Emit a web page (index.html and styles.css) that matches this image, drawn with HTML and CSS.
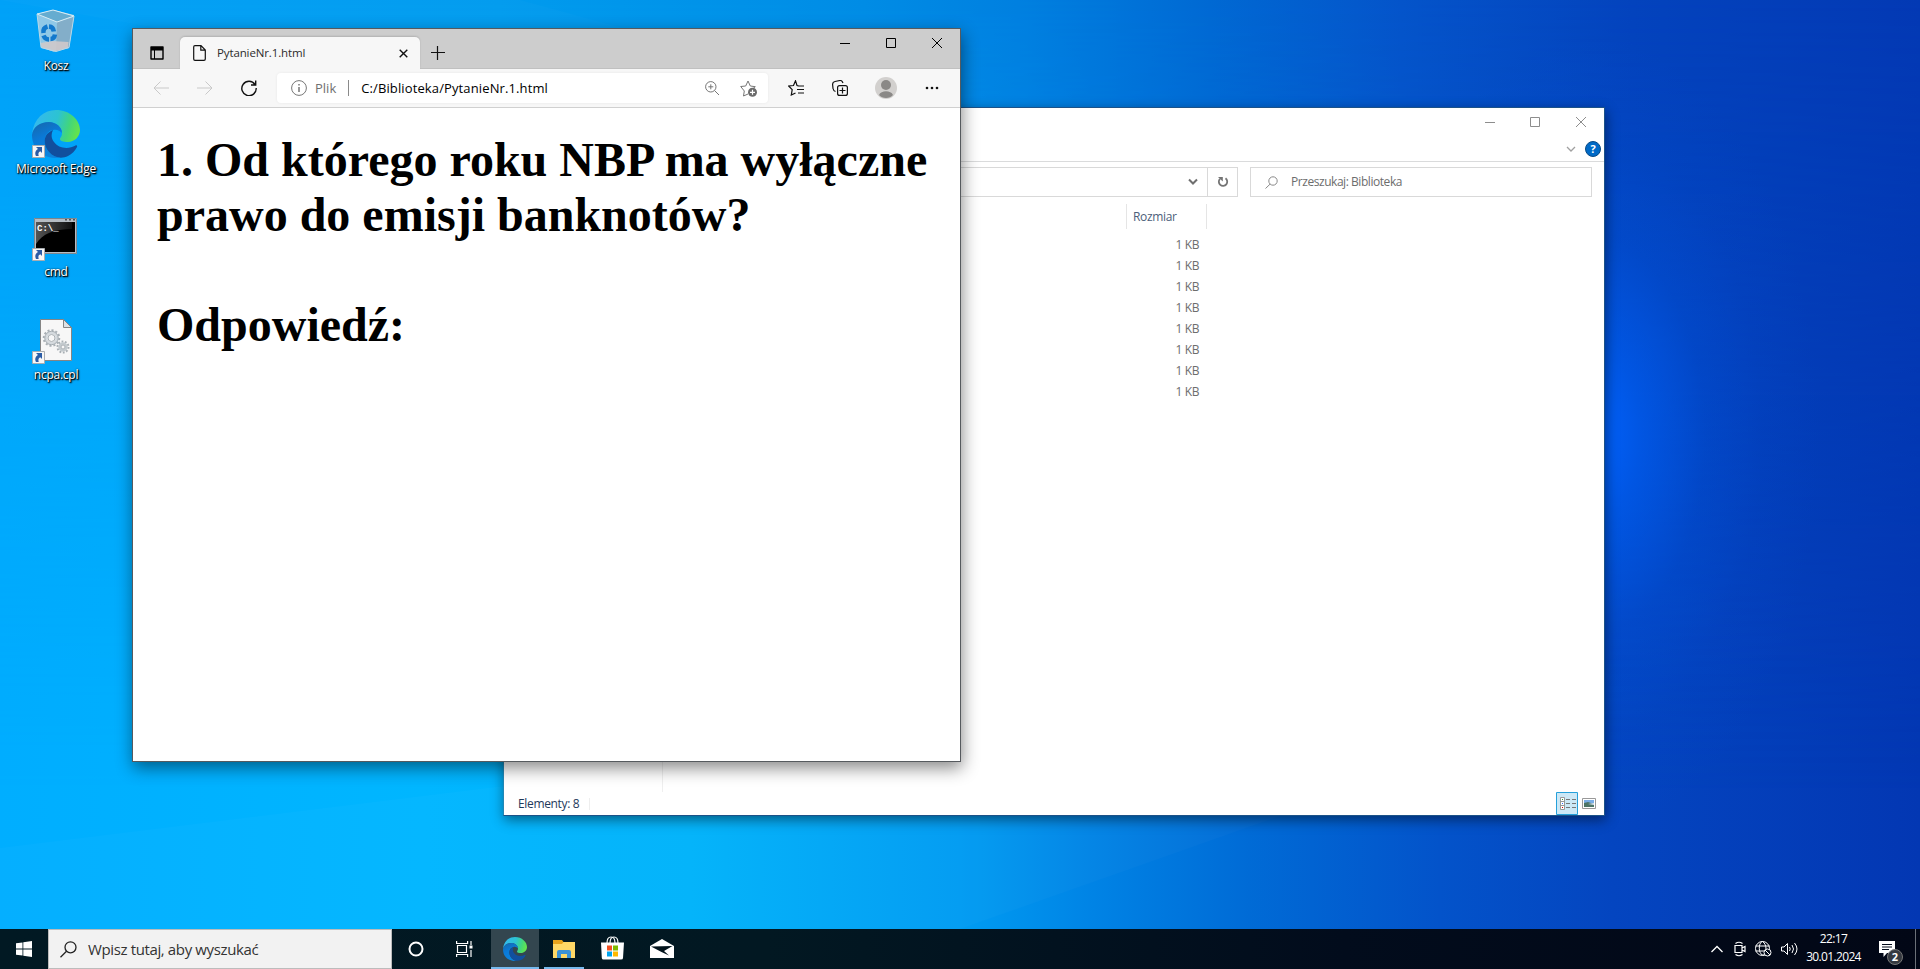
FILE: index.html
```
<!DOCTYPE html>
<html lang="pl">
<head>
<meta charset="utf-8">
<title>Pulpit</title>
<link rel="stylesheet" href="styles.css">
</head>
<body>
<svg width="0" height="0" class="defs" aria-hidden="true">
  <defs>
    <linearGradient id="eTop" x1="0" y1=".3" x2="1" y2=".5"><stop offset="0" stop-color="#35b8f1"/><stop offset=".5" stop-color="#2cc3d2"/><stop offset=".78" stop-color="#42d67b"/><stop offset="1" stop-color="#65e34c"/></linearGradient>
    <linearGradient id="eMid" x1="0" y1="0" x2=".4" y2="1"><stop offset="0" stop-color="#1767a9"/><stop offset=".5" stop-color="#0a7ad8"/><stop offset="1" stop-color="#0c83dc"/></linearGradient>
    <linearGradient id="cmdShine" x1="0" y1="0" x2="1" y2="0"><stop offset="0" stop-color="#555"/><stop offset="1" stop-color="#111"/></linearGradient>
    <symbol id="edge" viewBox="0 0 48 48">
      <path d="M0 24C2 8 12 0 24 0c14 0 24 10 24 20 0 7-6 12-12 12-5 0-8-1-8-3 0-1.500 2-2 2-6 0-6-6-11-13-11C8 12 2 17 0 24z" fill="url(#eTop)"/>
      <path d="M0 25C1 17 8 12 17 12c7 0 13 5 13 11-2-2-5-4-9-3-6 1-9 7-8 13 1 8 7 13 14 15C12 49 0 40 0 25z" fill="url(#eMid)"/>
      <path d="M19 21c-8 4-8 14-2 21 5 6 13 7 19 4 4-2 7-5 9-9 .500-1-.500-2-1.500-1.500C36 40 26 38 22 32c-3-4-3-8-1-12z" fill="#114f9e"/>
    </symbol>
    <symbol id="shortcut" viewBox="0 0 13 13">
      <path d="M.5.5h12v12H.5z" fill="#f7f7f7" stroke="#a9adb1"/>
      <path d="M4 2h6v6L8.300 6.300C6.500 7 6 8.500 6.700 11H4C2.500 8 3.500 5.500 6 4z" fill="#2b5ca6"/>
    </symbol>
  </defs>
</svg>
<div class="desktop">
  <svg class="rays" viewBox="0 0 1920 929" preserveAspectRatio="none">
    <path d="M0 848L504 786 1604 700 1280 816 960 929H0z" fill="#fff" opacity=".018"/>
    <path d="M0 0h520L960 120 504 90z" fill="#fff" opacity=".015"/>
  </svg>

  <nav class="icons">
    <div class="icon"><div class="pic"><svg width="48" height="48" viewBox="0 0 48 48">
      <path d="M5 7l17-4 20 5-5 33-16 3.500L9 40z" fill="#a9cfe4" opacity=".85"/>
      <path d="M25 15l17-5-5 31-13 3.500z" fill="#83aec9"/>
      <path d="M5 7l16-4 21 6-17 6z" fill="#65acd0" stroke="#d9edf5"/>
      <path d="M8.500 36l12-2 16 1-.500 6-14 3.500L9.500 41z" fill="#cfc9ca" opacity=".9"/>
      <path d="M5 7l4 33.500L24 44.500l13-4L42 9" fill="none" stroke="#b9d9e8"/>
      <g fill="none" stroke="#1279cd" stroke-width="4.500"><path d="M11.500 26c-.500-3 1-5.500 4-6.500"/><path d="M17 19.500c3 .200 4.500 2 4.800 5"/><path d="M11.500 28.500c1 2.500 3 4 5.500 4M18.500 32c2.500 0 4-1.500 4.500-4.500"/></g>
    </svg></div><span>Kosz</span></div>
    <div class="icon"><div class="pic"><svg width="48" height="48"><use href="#edge"/></svg><svg class="arrow" width="13" height="13"><use href="#shortcut"/></svg></div><span>Microsoft Edge</span></div>
    <div class="icon"><div class="pic"><svg width="48" height="48" viewBox="0 0 48 48">
      <path d="M2 5h43v36H2z" fill="#b5bcc3"/><path d="M2.500 5.500h42v35h-42z" fill="none" stroke="#7d858c"/>
      <path d="M33 6h2v1.500h-2zM37 6h2v1.500h-2zM41 6h2v1.500h-2z" fill="#555"/>
      <path d="M4 9h39v30H4z" fill="#000"/><path d="M4 9h36v7C22 16 10 21 4 31z" fill="url(#cmdShine)"/>
      <text class="prompt" x="5" y="18">C:\_</text>
    </svg><svg class="arrow" width="13" height="13"><use href="#shortcut"/></svg></div><span>cmd</span></div>
    <div class="icon"><div class="pic"><svg width="48" height="48" viewBox="0 0 48 48">
      <path d="M8.500 3.500h23l8 8v33h-31z" fill="#f7f7f7" stroke="#858585"/><path d="M31.500 3.500v8h8z" fill="#dce1e5" stroke="#858585"/>
      <g fill="none" stroke="#a8afb4"><circle cx="19.500" cy="22" r="7.500" stroke-width="2.500" stroke-dasharray="2 1.900"/><circle cx="19.500" cy="22" r="5.500" stroke="#d5dade" stroke-width="3"/><circle cx="19.500" cy="22" r="6.700"/><circle cx="19.500" cy="22" r="3.500"/><circle cx="31" cy="31" r="5.500" stroke-width="2" stroke-dasharray="1.800 1.600"/><circle cx="31" cy="31" r="3.500" stroke="#c3cace" stroke-width="2.500"/><circle cx="31" cy="31" r="2"/></g>
    </svg><svg class="arrow" width="13" height="13"><use href="#shortcut"/></svg></div><span>ncpa.cpl</span></div>
  </nav>

  <section class="window explorer">
    <div class="ex-title">
      <svg width="46" height="29" viewBox="0 0 46 29"><path d="M19 14.500h10"/></svg>
      <svg width="46" height="29" viewBox="0 0 46 29"><path d="M18.500 9.500h9v9h-9z"/></svg>
      <svg width="46" height="29" viewBox="0 0 46 29"><path d="M18 9l10 10M28 9l-10 10"/></svg>
    </div>
    <div class="ex-ribbon">
      <svg width="10" height="8" viewBox="0 0 10 8"><path d="M1 2l4 4 4-4" fill="none" stroke="#a0a0a0" stroke-width="1.300"/></svg>
      <b class="help">?</b>
    </div>
    <div class="ex-nav">
      <div class="ex-addr"><svg width="10" height="8" viewBox="0 0 10 8"><path d="M1 1.500l4 4 4-4" fill="none" stroke="#6f6f6f" stroke-width="2"/></svg></div>
      <div class="ex-refresh"><svg width="12" height="12" viewBox="0 0 12 12"><path d="M8.500 2.300a4.200 4.200 0 1 1-5.500.500" fill="none" stroke="#747474" stroke-width="1.800"/><path d="M1 1h4.800v4.500z" fill="#747474"/></svg></div>
      <div class="ex-search"><svg width="13" height="13" viewBox="0 0 13 13"><g fill="none" stroke="#8a8a8a"><circle cx="8" cy="5" r="4.200"/><path d="M5 8.200L.5 12.500"/></g></svg><span>Przeszukaj: Biblioteka</span></div>
    </div>
    <div class="ex-body">
      <div class="ex-tree"></div>
      <div class="ex-list">
        <div class="col-head"><span>Rozmiar</span></div>
        <ul><li>1 KB</li><li>1 KB</li><li>1 KB</li><li>1 KB</li><li>1 KB</li><li>1 KB</li><li>1 KB</li><li>1 KB</li></ul>
      </div>
    </div>
    <div class="ex-status">
      <span class="count">Elementy: 8</span><i></i>
      <svg class="details" width="22" height="23" viewBox="0 0 22 23"><path d="M.5.5h21v22H.5z" fill="#cce8f6" stroke="#26a0da"/><path d="M4.500 5.500h4v12h-4zM4.500 9.500h4M4.500 13.500h4" fill="#fff" stroke="#999"/><path d="M10 7.500h4M16 7.500h4M10 11.500h4M16 11.500h4M10 15.500h4M16 15.500h4" stroke="#777"/><path d="M6 7h1v1H6z" fill="#393"/><path d="M6 11h1v1H6z" fill="#36f"/><path d="M6 15h1v1H6z" fill="#d00"/></svg>
      <svg class="thumbs" width="14" height="11" viewBox="0 0 14 11"><path d="M.5.5h13v10H.5z" fill="#fff" stroke="#999"/><path d="M2 2h10v4H2z" fill="#79aee8"/><path d="M2 5l4-1 6 2v3H2z" fill="#4d7567"/><path d="M6 6l6-1v2z" fill="#d6e4ed"/></svg>
    </div>
  </section>

  <section class="window browser">
    <header class="tabs">
      <svg class="actions" width="14" height="14" viewBox="0 0 14 14"><path d="M1 1h12v12H1z" fill="none" stroke="#000" stroke-width="1.400" stroke-linejoin="round"/><path d="M1 1h12v3.500H1z"/><path d="M4.500 4v9" stroke="#000"/></svg>
      <div class="tab">
        <svg width="13" height="16" viewBox="0 0 13 16"><path d="M.7 2Q.7.700 2 .7h6l4.300 4.300v9q0 1.300-1.300 1.300H2Q.7 15.300.7 14zM7.800.800v4.400h4.400" fill="none" stroke="#111" stroke-width="1.200"/></svg>
        <span>PytanieNr.1.html</span>
        <svg class="tab-x" width="9" height="9" viewBox="0 0 9 9"><path d="M.7.700l7.600 7.600M8.300.700L.7 8.300" stroke="#111" stroke-width="1.400"/></svg>
      </div>
      <svg class="plus" width="14" height="14" viewBox="0 0 14 14"><path d="M6.500 0v14M0 6.500h14" stroke="#111" stroke-width="1.200"/></svg>
      <div class="controls">
        <svg width="46" height="29" viewBox="0 0 46 29"><path d="M18 14.500h10"/></svg>
        <svg width="46" height="29" viewBox="0 0 46 29"><path d="M18.500 9.500h9v9h-9z"/></svg>
        <svg width="46" height="29" viewBox="0 0 46 29"><path d="M18 9l10 10M28 9l-10 10"/></svg>
      </div>
    </header>
    <div class="toolbar">
      <div class="tool off"><svg width="16" height="14" viewBox="0 0 16 14"><path d="M16 7H1M7.500.500L1 7l6.500 6.500"/></svg></div>
      <div class="tool off"><svg width="16" height="14" viewBox="0 0 16 14"><path d="M0 7h15M8.500.500L15 7l-6.500 6.500"/></svg></div>
      <div class="tool"><svg width="16" height="16" viewBox="0 0 16 16"><path stroke-width="1.400" d="M14 4.500A7.200 7.200 0 1 0 15.200 8M14.700.500V5H10"/></svg></div>
      <div class="omnibox">
        <svg width="16" height="16" viewBox="0 0 16 16"><g stroke="#767676"><circle cx="8" cy="8" r="7.400"/><path d="M8 7v5M8 4v1.500" stroke-width="1.500"/></g></svg>
        <span class="scheme">Plik</span><i></i><span class="url">C:/Biblioteka/PytanieNr.1.html</span>
        <svg class="zoom" width="14" height="14" viewBox="0 0 14 14"><g stroke="#767676"><circle cx="5.800" cy="5.800" r="5.200"/><path d="M9.500 9.500L14 14M5.800 3.300v5M3.300 5.800h5"/></g></svg>
        <svg class="star" width="17" height="17" viewBox="0 0 17 17"><path stroke="#767676" d="M8 14l-4.500 2 .800-5L.7 6.500l5-.500L8 1l2.300 5 5 .700-2.500 2"/><circle cx="12.500" cy="12.300" r="4.500" fill="#6b6b6b" stroke="none"/><path d="M12.500 9.800v5M10 12.300h5" stroke="#fff" stroke-width="1.200"/></svg>
      </div>
      <div class="tool"><svg width="16" height="16" viewBox="0 0 16 16"><path stroke-width="1.200" d="M10.500 5.800L9 5.500 7.500.800 5.500 5.500.7 6l3.500 3.700L3.300 15l4.200-2M10 6h6M9 9.500h7M10 13h6"/></svg></div>
      <div class="tool"><svg width="16" height="16" viewBox="0 0 16 16"><path stroke-width="1.200" d="M3.500 11.500Q1.500 11 1 8.500L.6 4.500Q.5 2 3 1.500l5-1q2-.300 3 2.500"/><rect x="5.600" y="5.600" width="9.800" height="9.800" rx="2" stroke-width="1.200"/><path d="M10.500 7.500v6M7.500 10.500h6" stroke-width="1.200"/></svg></div>
      <div class="tool person"><svg width="22" height="22" viewBox="0 0 22 22"><circle class="halo" cx="11" cy="11" r="11"/><circle class="body" cx="11" cy="8" r="5"/><path class="body" d="M4 18c2-5 12-5 14 0-3 4-11 4-14 0z"/></svg></div>
      <div class="tool more"><svg width="14" height="4" viewBox="0 0 14 4"><g class="dots"><circle cx="2" cy="2" r="1.300"/><circle cx="7" cy="2" r="1.300"/><circle cx="12" cy="2" r="1.300"/></g></svg></div>
    </div>
    <main class="page"><h1>1. Od którego roku NBP ma wyłączne<br>prawo do emisji banknotów?<br><br>Odpowiedź:</h1></main>
  </section>
</div>

<footer class="taskbar">
  <div class="start"><svg width="16" height="16" viewBox="0 0 16 16"><path d="M0 2.300l6.500-.900v6.100H0zM7.300 1.300L16 0v7.500H7.300zM0 8.400h6.500v6.200L0 13.700zM7.300 8.400H16V16l-8.700-1.200z" fill="#fff"/></svg></div>
  <div class="search"><svg width="17" height="17" viewBox="0 0 17 17"><g fill="none" stroke="#222" stroke-width="1.300"><circle cx="10.500" cy="6.300" r="5.500"/><path d="M6.500 10.300L.5 16.300"/></g></svg><span>Wpisz tutaj, aby wyszukać</span></div>
  <div class="app"><svg width="16" height="16" viewBox="0 0 16 16"><circle cx="8" cy="8" r="6.500" fill="none" stroke="#fff" stroke-width="2"/></svg></div>
  <div class="app"><svg width="17" height="16" viewBox="0 0 17 16"><g fill="none" stroke="#fff" stroke-width="1.200"><path d="M1.500 4.500h9v7h-9zM.6 0v2.500h11V0M.6 16v-2.500h11V16M15 0v4M15 9v7"/></g><path d="M13.500 4.500h3v3h-3z" fill="#fff"/></svg></div>
  <div class="app active"><svg width="24" height="24"><use href="#edge"/></svg></div>
  <div class="app running"><svg width="22" height="20" viewBox="0 0 22 20"><path d="M0 1h9l1.500 2H21v16H0z" fill="#e8a31c"/><path d="M0 5h9l1.500-2H22v16H0z" fill="#ffd866"/><path d="M4 19v-6q0-2 2-2h10q2 0 2 2v6h-4v-4H8v4z" fill="#3b91d5"/></svg></div>
  <div class="app store"><svg width="24" height="24" viewBox="0 0 24 24"><path d="M7 7q0-6 4-6t4 6M10 7q0-6 4-6t4 6" fill="none" stroke="#fff" stroke-width="1.200"/><path d="M1 6.500h23L23 22q0 1.500-2 1.500H3.500Q2 23.500 1.800 22z" fill="#fff"/><path d="M7 9.500h5v5H7z" fill="#f25022"/><path d="M13 9.500h5v5h-5z" fill="#7fba00"/><path d="M7 15.500h5v5H7z" fill="#00a4ef"/><path d="M13 15.500h5v5h-5z" fill="#ffb900"/></svg></div>
  <div class="app mail"><svg width="24" height="20" viewBox="0 0 24 20"><path d="M0 7l12-7 12 7v12H0z" fill="#fff"/><path d="M1 7.500L22.500 7 14 12l5 4.500L11.500 13z" fill="#02131c"/></svg></div>
  <div class="tray">
    <svg width="12" height="8" viewBox="0 0 12 8"><path d="M.5 7L6 1.500 11.500 7" stroke-width="1.300"/></svg>
    <svg width="12" height="16" viewBox="0 0 12 16"><path d="M1 4.500h7v7H1zM8 7l3-1.500v5L8 9M1.500 2.500Q5 0 8.500 2.500M1.500 13.500Q5 16 8.500 13.500" stroke-width="1.200"/></svg>
    <svg width="17" height="16" viewBox="0 0 17 16"><circle cx="7.500" cy="7.500" r="7"/><path d="M.5 5h14M.5 10h9M9 14c-6 1-6-13-1.500-13.500M7.500.500C10 2 11 5 11 8"/><circle cx="12.500" cy="11.500" r="3.500" fill="#020a1a"/><path d="M10 9l5 5"/></svg>
    <svg width="17" height="14" viewBox="0 0 17 14"><path d="M.5 5h2.500l3.500-3.500v11L3 9H.5zM8.500 5q1.500 2 0 4M11 3q3 4 0 8M13.500 1q5 6 0 12"/></svg>
  </div>
  <div class="clock"><span>22:17</span><span>30.01.2024</span></div>
  <div class="notice"><svg width="16" height="16" viewBox="0 0 16 16"><path d="M0 0h16v12H8l-3.500 4v-4H0z" fill="#fff"/><path d="M3 3.500h10M3 6h10M3 8.500h7" stroke="#020a1a"/></svg><b>2</b></div>
  <div class="peek"></div>
</footer>
</body>
</html>
```

FILE: styles.css
```
* { box-sizing: border-box; }
html, body { margin: 0; height: 969px; overflow: hidden; }
body { font: 12px/16px "Open Sans", "Noto Sans", sans-serif; color: #000; display: flex; flex-direction: column; }
svg { display: block; flex: none; }
.defs { position: absolute; }
.desktop {
  position: relative; height: 929px; overflow: hidden;
  background: linear-gradient(90deg, #00aeff 0, #00b6ff 22%, #00b3fa 36%, #009cf2 50%, #0083e5 57%, #006bd6 65%, #0353ca 75%, #0445c0 84%, #0337b3 100%);
}
.desktop::before {
  content: ""; position: absolute; inset: 0;
  background: linear-gradient(90deg, #00a1f8 0, #009bee 26%, #008ce5 45%, #0080e0 53%, #0069d3 63%, #0454ca 73%, #0343bd 85%, #0339b4 100%);
  -webkit-mask-image: linear-gradient(#000, transparent 85%); mask-image: linear-gradient(#000, transparent 85%);
}
.desktop::after {
  content: ""; position: absolute; inset: 0;
  background: radial-gradient(ellipse 230px 400px at 1590px 435px, #0062ff 0, #005ff5aa 22%, #0056e24d 50%, #0050d81a 75%, transparent 100%);
}
.rays { position: absolute; inset: 0; width: 1920px; height: 929px; z-index: 1; }

.icons { position: relative; z-index: 1; width: 112px; padding-top: 7px; }
.icon { height: 103px; display: flex; flex-direction: column; align-items: center; }
.pic { position: relative; width: 48px; height: 48px; }
.arrow { position: absolute; left: 0; bottom: 0; }
.icon span { margin-top: 3px; color: #fff; letter-spacing: -.25px; white-space: nowrap; text-shadow: 1px 1px 1px #000, 1px 1px 2px #000, 0 0 2px #000a; }
.prompt { font: bold 9px "Liberation Mono", monospace; fill: #fff; }

.window { position: absolute; background: #fff; display: flex; flex-direction: column; }
.explorer { z-index: 2; left: 503px; top: 107px; width: 1102px; height: 709px; border: 1px solid #1c5288; border-left-color: #2387b5; box-shadow: 1px 4px 12px #0007; }
.ex-title { height: 29px; display: flex; justify-content: flex-end; }
.ex-title path { fill: none; stroke: #8d8d8d; }
.ex-ribbon { height: 25px; border-bottom: 1px solid #dadbdc; display: flex; justify-content: flex-end; align-items: center; gap: 9px; padding-right: 3px; }
.help { width: 16px; height: 16px; border-radius: 50%; background: #006ac7; border: 1px solid #084a86; color: #fff; font-size: 11px; line-height: 14px; text-align: center; }
.ex-nav { height: 42px; padding: 5px 12px 7px 12px; display: flex; color: #6d6d6d; }
.ex-nav > div { border: 1px solid #d9d9d9; display: flex; align-items: center; }
.ex-nav .ex-addr { flex: 1; justify-content: flex-end; padding-right: 9px; border-right: 0; }
.ex-nav .ex-refresh { width: 31px; justify-content: center; }
.ex-nav .ex-search { width: 342px; margin-left: 12px; padding-left: 14px; gap: 13px; }
.ex-search span { letter-spacing: -.45px; }
.ex-body { flex: 1; display: flex; }
.ex-tree { width: 159px; border-right: 1px solid #efefef; }
.ex-list { width: 544px; display: flex; flex-direction: column; align-items: flex-end; }
.col-head { width: 81px; height: 25px; border: solid #e5e5e5; border-width: 0 1px; padding: 5px 0 0 6px; color: #4c607a; letter-spacing: -.35px; }
.ex-list ul { list-style: none; margin: 6px 8px 0 0; padding: 0; text-align: right; color: #6d6d6d; letter-spacing: -.4px; }
.ex-list li { height: 21px; line-height: 20px; }
.ex-status { height: 23px; display: flex; align-items: center; padding: 0 8px 0 14px; color: #1e395b; }
.count { letter-spacing: -.35px; }
.ex-status i { width: 1px; height: 12px; background: #eee; margin-left: 10px; }
.details { margin-left: auto; margin-right: 4px; }

.browser { z-index: 3; left: 132px; top: 28px; width: 829px; height: 734px; border: 1px solid #565a5e; box-shadow: 1px 6px 16px #0007; }
.tabs { height: 40px; background: #cdcdcd; border-bottom: 1px solid #c0c0c0; display: flex; align-items: flex-end; padding-left: 17px; }
.actions { margin-bottom: 8px; }
.tab { width: 240px; height: 32px; margin: 0 0 -1px 16px; background: #f7f7f7; border-radius: 5px 5px 0 0; display: flex; align-items: center; padding: 0 12px 0 13px; box-shadow: 0 -1px 2px #0002; }
.tab span { margin-left: 11px; font-size: 11.5px; letter-spacing: -.12px; color: #2c2c2c; }
.tab-x { margin-left: auto; }
.plus { margin: 0 0 8px 11px; }
.controls { margin: 0 0 auto auto; display: flex; }
.controls path { fill: none; stroke: #000; }
.toolbar { height: 39px; background: #f7f7f7; border-bottom: 1px solid #d0d0d0; display: flex; align-items: center; padding-left: 6px; }
.tool { width: 44px; display: flex; justify-content: center; }
.tool svg, .omnibox svg { fill: none; stroke: #111; }
.tool.off svg { stroke: #c9c9c9; }
.omnibox { width: 491px; height: 30px; margin: 0 6px; background: #fff; border-radius: 4px; box-shadow: 0 0 3px #0001; display: flex; align-items: center; padding: 0 11px 0 14px; font-size: 13px; }
.scheme { margin-left: 8px; color: #707070; }
.omnibox i { width: 1px; height: 16px; background: #8a8a8a; margin: 0 12px 0 12px; }
.url { letter-spacing: .12px; }
.zoom { margin-left: auto; }
.star { margin-left: 21px; }
.tool.person { width: 46px; margin-left: 1px; }
.tool.more { margin-left: 1px; }
.person svg { stroke: none; }
.tool .halo { fill: #d2d0ce; stroke: none; }
.tool .body { fill: #8a8886; stroke: none; }
.dots { fill: #111; stroke: none; }
.page { padding: 24px 24px; }
.page h1 { margin: 0; font: bold 48px/55px "Liberation Serif", "Times New Roman", serif; white-space: nowrap; }

.taskbar { height: 40px; background: linear-gradient(90deg, #011923 0, #021822 40%, #020c1c 70%, #020716 100%); display: flex; color: #fff; }
.start, .app { width: 48px; display: flex; align-items: center; justify-content: center; }
.search { width: 344px; background: #f2f2f2; border: 1px solid #bcbcbc; display: flex; align-items: center; padding-left: 11px; color: #333; font-size: 15px; }
.search span { margin-left: 11px; letter-spacing: -.37px; }
.active { margin-left: 3px; background: #33464f; box-shadow: inset 0 -2px #76b9ed; }
.running { width: 40px; margin: 0 4px 0 5px; box-shadow: inset 0 -2px #76b9ed; }
.store svg { margin-bottom: 3px; }
.mail { margin-left: 2px; }
.tray { margin-left: auto; display: flex; align-items: center; gap: 11px; }
.tray svg { fill: none; stroke: #fff; }
.tray svg + svg + svg { margin-left: -2px; }
.clock { width: 71px; display: flex; flex-direction: column; align-items: center; line-height: 18px; padding-top: 1px; letter-spacing: -.65px; }
.notice { position: relative; margin-left: 10px; padding-top: 12px; width: 36px; }
.notice b { position: absolute; left: 8px; top: 20px; width: 16px; height: 16px; border-radius: 50%; background: #353940; border: 1px solid #777; font-size: 11px; line-height: 14px; text-align: center; }
.peek { width: 5px; border-left: 1px solid #6b7078; }
```
